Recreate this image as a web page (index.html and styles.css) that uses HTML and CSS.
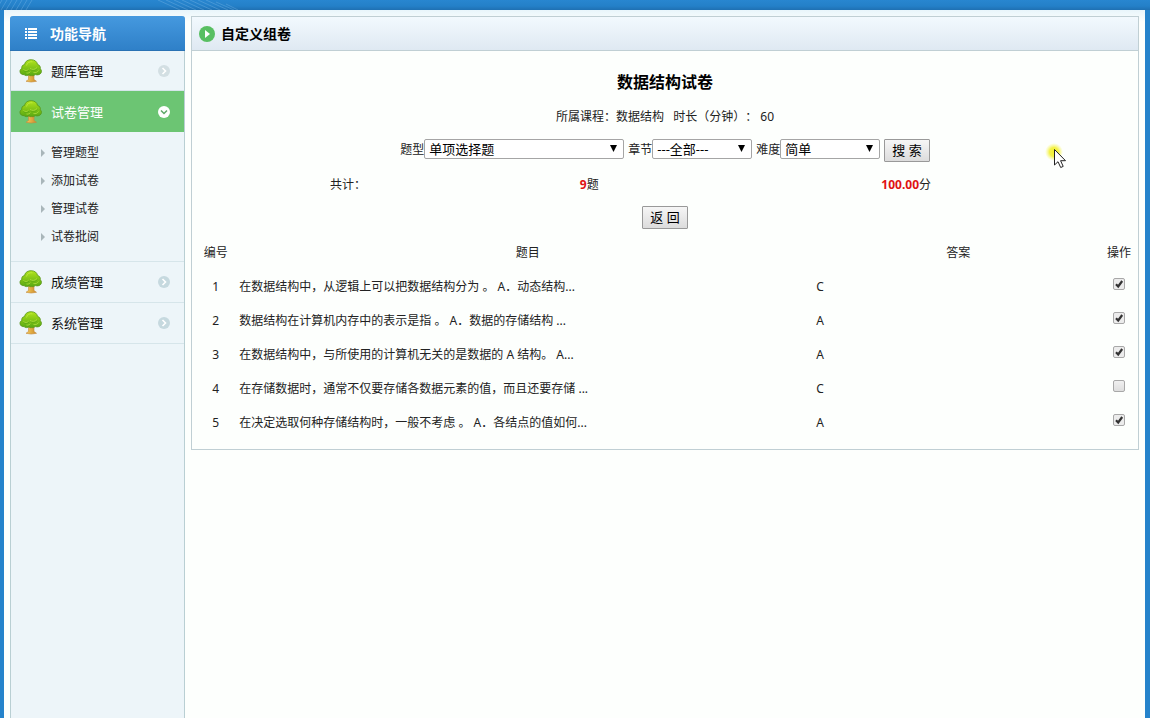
FILE: index.html
```html
<!DOCTYPE html>
<html lang="zh-CN">
<head>
<meta charset="utf-8">
<title>自定义组卷</title>
<link rel="stylesheet" href="styles.css">
</head>
<body>
<svg class="defs" aria-hidden="true">
  <defs>
    <linearGradient id="leaf" x1="0" y1="0" x2="0" y2="1">
      <stop offset="0" stop-color="#b2e41c"/>
      <stop offset="1" stop-color="#57a812"/>
    </linearGradient>
    <linearGradient id="trunk" x1="0" y1="0" x2="1" y2="0">
      <stop offset="0" stop-color="#f6cc58"/>
      <stop offset="1" stop-color="#cc8a2c"/>
    </linearGradient>
    <radialGradient id="glow">
      <stop offset="0" stop-color="#f2f02c"/>
      <stop offset=".5" stop-color="#f4f24a"/>
      <stop offset="1" stop-color="#f8f880" stop-opacity="0"/>
    </radialGradient>
    <symbol id="tree" viewBox="0 0 24 24">
      <path d="M9.500 14h5.500v6.500l2.500 1.800q-5.500 1.500-10.500 0l2.500-1.800z" fill="url(#trunk)" stroke="#c48a3c" stroke-width=".6"/>
      <path d="M5.500 5.500C6 2 9.500.5 12.500.7c3.300.1 5.500 2 6 4.600 2 .6 3.300 2.600 2.800 4.500 1.600 1.300 1.600 4-.2 5.200-1.500 1.100-3.600 1-4.800.6-1.300 1-2.500 1.300-3.700 1-1.200.3-2-.1-2.700-.7-1.700 1-3.700 1-4.800-.3-2.200.3-3.900-1-4.100-2.900-.2-1.500.6-2.600 1.800-3.200-.4-1.800.6-3.700 2.700-4z" fill="url(#leaf)" stroke="#559416" stroke-width=".8"/>
      <path d="M7.500 6.500C8 3.500 11 2.300 13.500 2.800M4.500 10.500c1.500 1.500 4 1.300 5-.3M11 9.500c2 1.500 5.500 1.200 7-1M7.500 14c1.500.3 3-.2 3.800-1.300M14.500 13.500c2 .5 4-.2 5-2" fill="none" stroke="#c8ee50" stroke-width="1" opacity=".6"/>
      <path d="M4.500 11.600c1.800 1.300 4.300 1 5.500-.5M11.500 10.700c2.500 1.300 5.500.7 7-1.300" fill="none" stroke="#4f9a12" stroke-width=".8" opacity=".6"/>
    </symbol>
  </defs>
</svg>
<div class="frame">
  <header class="topbar">
    <svg width="260" height="10" aria-hidden="true">
      <path d="M-4 10l6-10M1 10l6-10M6 10l6-10M11 10l6-10M16 10l6-10M21 10l6-10M26 10l6-10M158 0l22 10M166 0l22 10M174 0l22 10M182 0l22 10M190 0l22 10M198 0l22 10M206 0l22 10M216 2l18 8M226 4l12 6" fill="none" stroke="#8cc4ec" stroke-width=".8" opacity=".4"/>
    </svg>
  </header>
  <div class="page">
    <nav class="sidebar">
      <h2 class="sidebar-title">
        <svg width="12" height="12" viewBox="0 0 12 12" aria-hidden="true"><path d="M0 0h2v2H0zM3 0h9v2H3zM0 3h2v2H0zM3 3h9v2H3zM0 6h2v2H0zM3 6h9v2H3zM0 9h2v2H0zM3 9h9v2H3z" fill="#fff"/></svg>
        功能导航
      </h2>
      <a class="menu-item" href="#">
        <svg class="tree" aria-hidden="true"><use href="#tree"/></svg>
        <span class="menu-label">题库管理</span>
        <svg class="chev" viewBox="0 0 12 12" aria-hidden="true"><circle cx="6" cy="6" r="6" fill="#d3dfe3"/><path d="M4.500 3l3 3-3 3" fill="none" stroke="#fff" stroke-width="1.600"/></svg>
      </a>
      <a class="menu-item active" href="#">
        <svg class="tree" aria-hidden="true"><use href="#tree"/></svg>
        <span class="menu-label">试卷管理</span>
        <svg class="chev" viewBox="0 0 12 12" aria-hidden="true"><circle cx="6" cy="6" r="6" fill="#fff"/><path d="M3 4.500l3 3 3-3" fill="none" stroke="#5fa868" stroke-width="1.500"/></svg>
      </a>
      <ul class="submenu">
        <li><a href="#">管理题型</a></li>
        <li><a href="#">添加试卷</a></li>
        <li><a href="#">管理试卷</a></li>
        <li><a href="#">试卷批阅</a></li>
      </ul>
      <a class="menu-item" href="#">
        <svg class="tree" aria-hidden="true"><use href="#tree"/></svg>
        <span class="menu-label">成绩管理</span>
        <svg class="chev" viewBox="0 0 12 12" aria-hidden="true"><circle cx="6" cy="6" r="6" fill="#c6d9df"/><path d="M4.500 3l3 3-3 3" fill="none" stroke="#fff" stroke-width="1.600"/></svg>
      </a>
      <a class="menu-item" href="#">
        <svg class="tree" aria-hidden="true"><use href="#tree"/></svg>
        <span class="menu-label">系统管理</span>
        <svg class="chev" viewBox="0 0 12 12" aria-hidden="true"><circle cx="6" cy="6" r="6" fill="#c6d9df"/><path d="M4.500 3l3 3-3 3" fill="none" stroke="#fff" stroke-width="1.600"/></svg>
      </a>
    </nav>
    <main class="panel">
      <h1 class="panel-title">
        <svg width="16" height="16" viewBox="0 0 16 16" aria-hidden="true"><circle cx="8" cy="8" r="8" fill="#58bf62"/><path d="M6 4l5 4-5 4z" fill="#fff"/></svg>
        自定义组卷
      </h1>
      <div class="panel-body">
        <h2 class="paper-name">数据结构试卷</h2>
        <p class="row info">所属课程：数据结构 &nbsp; 时长（分钟）： 60</p>
        <form class="row filters">
          <label for="type">题型</label><select id="type" class="wide"><option>单项选择题</option></select>
          <label for="chapter">章节</label><select id="chapter"><option>---全部---</option></select>
          <label for="level">难度</label><select id="level"><option>简单</option></select>
          <button type="button" class="btn">搜 索</button>
        </form>
        <div class="totals">
          <span>共计：</span>
          <span><b>9</b>题</span>
          <span><b>100.00</b>分</span>
        </div>
        <div class="row"><button type="button" class="btn">返 回</button></div>
        <table class="questions">
          <thead>
            <tr><th class="c-no">编号</th><th class="c-title">题目</th><th class="c-answer">答案</th><th class="c-op">操作</th></tr>
          </thead>
          <tbody>
            <tr><td class="mid">1</td><td>在数据结构中，从逻辑上可以把数据结构分为 。 A．动态结构...</td><td>C</td><td class="mid"><input type="checkbox" aria-label="选择第1题" checked></td></tr>
            <tr><td class="mid">2</td><td>数据结构在计算机内存中的表示是指 。 A．数据的存储结构 ...</td><td>A</td><td class="mid"><input type="checkbox" aria-label="选择第2题" checked></td></tr>
            <tr><td class="mid">3</td><td>在数据结构中，与所使用的计算机无关的是数据的 A 结构。 A...</td><td>A</td><td class="mid"><input type="checkbox" aria-label="选择第3题" checked></td></tr>
            <tr><td class="mid">4</td><td>在存储数据时，通常不仅要存储各数据元素的值，而且还要存储 ...</td><td>C</td><td class="mid"><input type="checkbox" aria-label="选择第4题"></td></tr>
            <tr><td class="mid">5</td><td>在决定选取何种存储结构时，一般不考虑 。 A．各结点的值如何...</td><td>A</td><td class="mid"><input type="checkbox" aria-label="选择第5题" checked></td></tr>
          </tbody>
        </table>
      </div>
    </main>
  </div>
</div>
<svg class="pointer" width="28" height="32" viewBox="0 0 28 32" aria-hidden="true">
  <circle cx="10" cy="10" r="9" fill="url(#glow)"/>
  <path d="M10.500 7.500v15.500l3.500-3.300 2.700 5.800 2.500-1.100-2.600-5.700h4.900z" fill="#fff" stroke="#222" stroke-width="1"/>
</svg>
</body>
</html>
```
FILE: styles.css
```css
* { box-sizing: border-box; }

body {
  margin: 0;
  font: 12px/34px "Noto Sans", "Noto Sans CJK SC", sans-serif;
  text-spacing-trim: space-all;
  color: #222;
  background: #fdfffd;
}

h1, h2, p, ul { margin: 0; padding: 0; }
a { color: inherit; text-decoration: none; }
.defs { position: absolute; width: 0; height: 0; }

.frame {
  display: flex;
  flex-direction: column;
  min-height: 100vh;
  border: solid #2583cb;
  border-width: 0 5px 0 4px;
}

.topbar {
  height: 10px;
  margin: 0 -5px 0 -4px;
  background: linear-gradient(#2886d0, #2480c8 60%, #1f70b2);
}
.topbar svg { display: block; }

.page {
  flex: 1;
  display: flex;
  align-items: flex-start;
  gap: 6px;
  padding: 6px 6px 0;
  background: linear-gradient(#e8f5fb, #fdfffd 12px);
}

.sidebar {
  flex: 0 0 175px;
  align-self: stretch;
  border: 1px solid #b9cfd3;
  border-width: 0 1px;
  border-radius: 3px 3px 0 0;
  background: #edf5f9;
}

.sidebar-title {
  display: flex;
  align-items: center;
  gap: 13px;
  height: 35px;
  margin: 0 -1px;
  padding: 2px 15px 0;
  border-bottom: 1px solid #2a72b4;
  border-radius: 3px 3px 0 0;
  background: linear-gradient(#4599df, #2f80c8);
  color: #fff;
  font-size: 14px;
}

.menu-item {
  display: flex;
  align-items: center;
  height: 41px;
  padding: 0 14px 0 8px;
  border-bottom: 1px solid #d6e5ea;
  color: #111;
  font-size: 13px;
}
.sidebar-title + .menu-item { height: 40px; }
.menu-item.active { padding-top: 1px; border: 0; background: #6cc573; color: #fff; }
.tree { width: 24px; height: 24px; }
.menu-label { flex: 1; margin-left: 8px; }
.chev { width: 12px; height: 12px; }

.submenu {
  list-style: none;
  padding: 7px 0 10px 30px;
  border-bottom: 1px solid #d6e5ea;
  line-height: 28px;
}
.submenu a { display: flex; align-items: center; gap: 6px; }
.submenu a::before {
  content: "";
  border: solid transparent;
  border-width: 4px 0 4px 4px;
  border-left-color: #a9b6ba;
}

.panel {
  flex: 1;
  border: 1px solid #c0cfd4;
  background: #fdfffd;
}

.panel-title {
  display: flex;
  align-items: center;
  gap: 6px;
  height: 34px;
  padding: 0 7px;
  border-bottom: 1px solid #c0cfd4;
  background: linear-gradient(#f2f9fe, #dfe9f2);
  color: #000;
  font-size: 14px;
}

.panel-body { padding: 14px 0 10px; }
.paper-name { font-size: 16px; text-align: center; color: #000; line-height: 34px; }
.row { min-height: 34px; text-align: center; }
.info { padding-top: 2px; line-height: 32px; }

.filters {
  display: flex;
  justify-content: center;
  align-items: center;
}

select {
  appearance: none;
  width: 100px;
  height: 20px;
  margin: 0 4px 2px 0;
  padding: 0 4px;
  border: 1px solid #a5a5a5;
  border-radius: 2px;
  background: #fff url("data:image/svg+xml,%3Csvg xmlns='http://www.w3.org/2000/svg' width='7' height='7'%3E%3Cpath d='M0 0h7L3.500 7z'/%3E%3C/svg%3E") no-repeat right 6px top 5px;
  color: #000;
  font: 13px/18px "Noto Sans", "Noto Sans CJK SC", sans-serif;
}
select.wide { width: 200px; }

.btn {
  height: 23px;
  padding: 0 7px;
  border: 1px solid #999;
  border-radius: 1px;
  background: linear-gradient(#f6f6f6, #dcdcdc);
  color: #000;
  font: 13px/21px "Noto Sans", "Noto Sans CJK SC", sans-serif;
}

.totals {
  display: grid;
  grid-template-columns: 33fr 18fr 49fr;
  padding-top: 2px;
  line-height: 32px;
  text-align: center;
}
.totals b { color: #e01212; }

.questions {
  width: 100%;
  table-layout: fixed;
  border-collapse: collapse;
  line-height: 32px;
}
.questions th { font-weight: normal; }
.questions th, .questions td { height: 34px; padding: 2px 0 0; }
.c-no { width: 5%; }
.c-title { width: 61%; }
.c-answer { width: 30%; }
.c-op { width: 4%; }
.mid { text-align: center; }

input[type="checkbox"] {
  appearance: none;
  display: block;
  width: 12px;
  height: 12px;
  margin: 0 auto 6px;
  border: 1px solid #a8a8a8;
  border-radius: 2px;
  background: linear-gradient(#f0f0f0, #dedede);
}
input[type="checkbox"]:checked {
  background: #ececec url("data:image/svg+xml,%3Csvg xmlns='http://www.w3.org/2000/svg' width='10' height='10'%3E%3Cpath d='M2 5.200l2.200 2.300L8.200 2' fill='none' stroke='%23333' stroke-width='2.200'/%3E%3C/svg%3E") center no-repeat;
}

.pointer {
  position: absolute;
  left: 1044px;
  top: 142px;
  pointer-events: none;
}
```
